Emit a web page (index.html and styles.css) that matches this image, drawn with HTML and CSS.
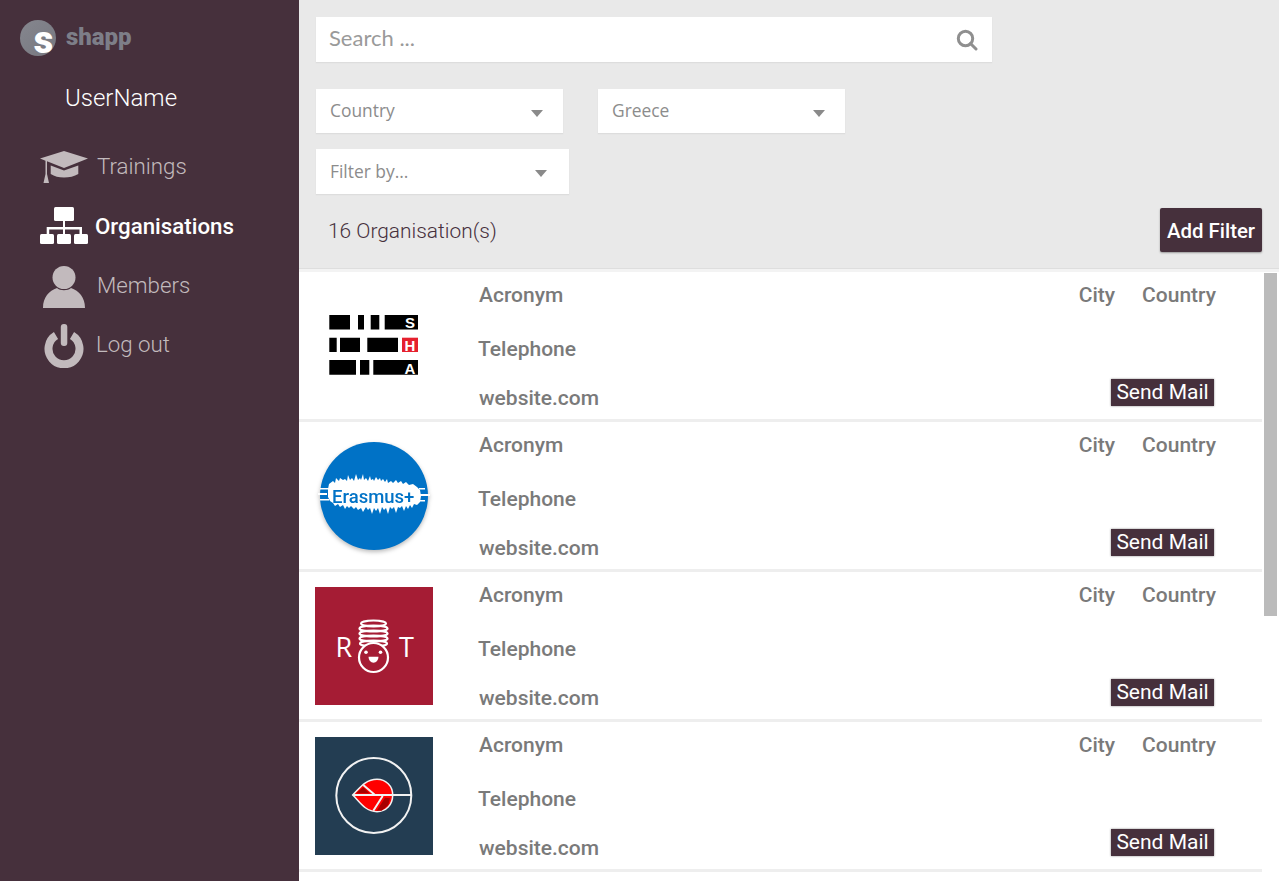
FILE: index.html
```html
<!DOCTYPE html>
<html lang="en">
<head>
    <meta charset="UTF-8">
    <title>shapp</title>
    <link rel="stylesheet" href="styles.css">
</head>
<body>
    <aside class="sidebar">
        <div class="brand">
            <span class="brand-mark">s</span>
            <span class="brand-name">shapp</span>
        </div>
        <div class="user-name">UserName</div>
        <nav class="nav">
            <a class="nav-item nav-trainings">
                <svg class="nav-icon" viewBox="0 0 48 32"><path d="M24 0 48 7.5 24 17 7 10.3V23l2 9H3.500l2-9V9.700L0 7.500z"/><path d="M10.700 14.500 24 19.500l14.300-5V23c-4 2.500-9 3.500-14.300 3.500S14.500 25.500 10.700 23z"/></svg>
                <span>Trainings</span>
            </a>
            <a class="nav-item nav-orgs active">
                <svg class="nav-icon" viewBox="0 0 48 37"><rect x="14" y="0" width="20" height="14" rx="1.5"/><rect x="0" y="27" width="14" height="10" rx="1.5"/><rect x="17" y="27" width="14" height="10" rx="1.5"/><rect x="34" y="27" width="14" height="10" rx="1.5"/><path d="M23 14h2v6h17v7h-2.500v-4.500H25V27h-2v-4.500H9.200V27H6.700v-7H23z"/></svg>
                <span>Organisations</span>
            </a>
            <a class="nav-item nav-members">
                <svg class="nav-icon" viewBox="0 0 42 42"><circle cx="21" cy="11.5" r="11.5"/><path d="M0 42C0 31 6 25 14 22c3 3 11 3 14 0 8 3 14 9 14 20z"/></svg>
                <span>Members</span>
            </a>
            <a class="nav-item nav-logout">
                <svg class="nav-icon" viewBox="0 0 40 44"><path d="M12 11.500a15.500 15.500 0 1 0 16 0" fill="none"/><rect x="16.800" y="0" width="6.500" height="22" rx="3"/></svg>
                <span>Log out</span>
            </a>
        </nav>
    </aside>

    <main class="main">
        <header class="toolbar">
            <div class="search">
                <span class="search-text">Search ...</span>
                <svg class="search-icon" viewBox="0 0 22 22"><circle cx="9.500" cy="9.500" r="7.200"/><path d="M14.500 14.500 20 20"/></svg>
            </div>
            <div class="filters">
                <div class="select select-country"><span>Country</span><i class="caret"></i></div>
                <div class="select select-country"><span>Greece</span><i class="caret"></i></div>
            </div>
            <div class="select select-filter"><span>Filter by...</span><i class="caret"></i></div>
            <div class="count-row">
                <span class="count">16 Organisation(s)</span>
                <button class="add-btn">Add Filter</button>
            </div>
        </header>

        <div class="list-wrap">
            <div class="list">
                <article class="org">
                    <svg class="org-logo" viewBox="0 0 118 118">
                        <rect width="118" height="118" fill="#fff"/>
                        <path d="M14.300 28H35v14.500H14.300zM43 28h6v14.500h-6zM55.700 28h8.600v14.500h-8.600zM69.700 28H103v14.500H69.700zM14.300 50.700h7.400V65h-7.400zM25 50.700h20V65H25zM52.300 50.700H83V65H52.300zM14.300 73H41v14.700H14.300zM45 73h9.300v14.700H45zM58.300 73H103v14.700H58.300z"/>
                        <rect x="87" y="50.700" width="16" height="14.300" fill="#e5202e"/>
                        <text class="sha-letter" x="95" y="40.700">S</text>
                        <text class="sha-letter" x="95" y="63.500">H</text>
                        <text class="sha-letter" x="95" y="86.500">A</text>
                    </svg>
                    <div class="org-info">
                        <div class="org-line line-top"><span class="acronym">Acronym</span><span class="place"><span class="city">City</span><span>Country</span></span></div>
                        <div class="org-line line-mid"><span class="phone">Telephone</span></div>
                        <div class="org-line line-end"><span class="site">website.com</span><button class="mail-btn">Send Mail</button></div>
                    </div>
                </article>

                <article class="org">
                    <svg class="org-logo logo-erasmus" viewBox="0 0 118 118">
                        <circle cx="59" cy="59" r="54" fill="#0072c6"/>
                        <polygon fill="#fff" points="14,47 18,44 20,46 21,41 24,44 25,41 28,43 30,42 32,44 33,38 35,43 37,41 39,44 41,37 43,43 45,41 46,43 48,37 49,43 51,41 53,44 55,39 56,43 58,42 59,44 61,40 63,43 65,41 66,44 68,42 70,45 72,42 73,46 76,44 78,46 81,43 83,46 86,44 88,47 91,45 94,48 98,47 102,50 105,53 106,59 105,65 102,68 99,67 97,71 95,68 93,72 91,69 89,74 87,69 85,71 83,70 81,76 79,70 77,72 75,70 73,77 71,71 69,73 67,70 65,77 63,71 61,74 59,71 57,77 55,71 53,73 51,70 48,75 46,71 43,73 41,70 39,72 36,69 34,71 32,69 30,72 28,68 25,70 23,67 20,69 18,66 15,64 13,60 13,52"/>
                        <path fill="#fff" d="M5 51h9v1.500H5zM3 56h9v2H3zM5 62h9v1.500H5zM104 57h11v2h-11zM102 63h8v1.500h-8zM104 51h6v1.500h-6z"/>
                        <text class="erasmus-text" x="17" y="66">Erasmus+</text>
                    </svg>
                    <div class="org-info">
                        <div class="org-line line-top"><span class="acronym">Acronym</span><span class="place"><span class="city">City</span><span>Country</span></span></div>
                        <div class="org-line line-mid"><span class="phone">Telephone</span></div>
                        <div class="org-line line-end"><span class="site">website.com</span><button class="mail-btn">Send Mail</button></div>
                    </div>
                </article>

                <article class="org">
                    <svg class="org-logo" viewBox="0 0 118 118">
                        <rect width="118" height="118" fill="#a51c34"/>
                        <text class="rt-letter" x="20.500" y="70">R</text>
                        <text class="rt-letter" x="84" y="70">T</text>
                        <g fill="none" stroke="#fff" stroke-width="2.200">
                            <ellipse cx="58.500" cy="36.500" rx="12.500" ry="3"/>
                            <ellipse cx="58.500" cy="41.500" rx="14" ry="3"/>
                            <ellipse cx="58.500" cy="46.500" rx="14" ry="3"/>
                            <ellipse cx="58.500" cy="51.500" rx="14" ry="3"/>
                            <ellipse cx="58.500" cy="56.500" rx="13.500" ry="3"/>
                            <circle cx="58.500" cy="70.500" r="14.500" fill="#a51c34"/>
                        </g>
                        <circle cx="51" cy="65.300" r="1.800" fill="#fff"/>
                        <circle cx="65.500" cy="65.300" r="1.800" fill="#fff"/>
                        <path d="M53.500 69.700h10a5 6 0 0 1-10 0z" fill="#fff"/>
                    </svg>
                    <div class="org-info">
                        <div class="org-line line-top"><span class="acronym">Acronym</span><span class="place"><span class="city">City</span><span>Country</span></span></div>
                        <div class="org-line line-mid"><span class="phone">Telephone</span></div>
                        <div class="org-line line-end"><span class="site">website.com</span><button class="mail-btn">Send Mail</button></div>
                    </div>
                </article>

                <article class="org">
                    <svg class="org-logo" viewBox="0 0 118 118">
                        <rect width="118" height="118" fill="#233d52"/>
                        <circle cx="58.800" cy="58.500" r="37.500" fill="none" stroke="#f2f2f2" stroke-width="2"/>
                        <path d="M37.700 58C44 52 50 42.300 62 42.300c9 0 15.700 6.700 15.700 15.700 0 10-6.700 16.700-15.700 16.700C50 74.700 44 64 37.700 58z" fill="#f00" stroke="#f2f2f2" stroke-width="1.500"/>
                        <path d="M41 56.300l7.300-6 6 6zM61.700 73.700 70 60.700l5 .6-1.700 6.700-6.600 5.700z" fill="#a80000"/>
                        <path d="M37.700 58h58.800M48.300 48 60 58M58.300 73.700 67.700 59" fill="none" stroke="#f2f2f2" stroke-width="2"/>
                    </svg>
                    <div class="org-info">
                        <div class="org-line line-top"><span class="acronym">Acronym</span><span class="place"><span class="city">City</span><span>Country</span></span></div>
                        <div class="org-line line-mid"><span class="phone">Telephone</span></div>
                        <div class="org-line line-end"><span class="site">website.com</span><button class="mail-btn">Send Mail</button></div>
                    </div>
                </article>
            </div>
            <div class="scrollbar"><div class="scroll-thumb"></div></div>
        </div>
    </main>
</body>
</html>
```

FILE: styles.css
```css
* {
    box-sizing: border-box;
}
html, body {
    height: 100%;
}
body {
    margin: 0;
    display: flex;
    overflow: hidden;
    font-family: Roboto, "Liberation Sans", sans-serif;
    background-color: #fff;
}

/* sidebar */
.sidebar {
    width: 299px;
    flex: none;
    padding: 20px 0 0 20px;
    background-color: #46303c;
    color: #fff;
}
.brand {
    display: flex;
    align-items: center;
    height: 36px;
}
.brand-mark {
    width: 36px;
    height: 36px;
    flex: none;
    padding: 3px 0 0 11px;
    border-radius: 50%;
    background: linear-gradient(135deg, #85868e, #777880);
    color: #fff;
    font-size: 38px;
    font-weight: 900;
    line-height: 34px;
    text-align: center;
}
.brand-name {
    margin: -2px 0 0 10px;
    color: #7d7e88;
    font-size: 24px;
    font-weight: 900;
}
.user-name {
    margin: 27px 0 0 45px;
    font-size: 24px;
    font-weight: 300;
    line-height: 30px;
}
.nav {
    margin-top: 24px;
}
.nav-item {
    display: flex;
    align-items: center;
    height: 59px;
    color: #c2babd;
    font-size: 22.3px;
    font-weight: 300;
}
.nav-trainings span {
    margin-top: -1px;
}
.nav-icon {
    flex: none;
    fill: #c2babd;
    stroke: #c2babd;
    stroke-width: 0;
}
.nav-item.active {
    color: #fff;
    font-weight: 500;
}
.nav-item.active .nav-icon {
    fill: #fff;
}
.nav-trainings .nav-icon {
    width: 48px;
    height: 32px;
    margin: 0 9px 0 20px;
}
.nav-orgs .nav-icon {
    width: 48px;
    height: 37px;
    margin: 0 7px 0 20px;
}
.nav-members .nav-icon {
    width: 42px;
    height: 42px;
    margin: 5px 12px 0 23px;
}
.nav-logout .nav-icon {
    width: 40px;
    height: 44px;
    margin: 4px 12px 0 24px;
}
.nav-logout .nav-icon path {
    stroke-width: 8;
}

/* main column */
.main {
    flex: 1;
    min-width: 0;
    display: flex;
    flex-direction: column;
}
.toolbar {
    height: 272px;
    flex: none;
    padding: 17px 17px 0 17px;
    background-color: #e9e9e9;
    border-bottom: 3px solid #f3f3f3;
    box-shadow: inset 0 -1px #dedede;
}
.search {
    display: flex;
    align-items: center;
    justify-content: space-between;
    width: 676px;
    height: 45px;
    padding: 0 14px 0 13px;
    background-color: #fff;
    box-shadow: 0 1px 1px #ddd;
}
.search-text {
    margin-top: -5px;
    color: #9a9a9a;
    font-family: Lato, sans-serif;
    font-size: 22px;
}
.search-icon {
    width: 22px;
    height: 22px;
    fill: none;
    stroke: #8f8f8f;
    stroke-width: 3;
    stroke-linecap: round;
}
.filters {
    display: flex;
    gap: 35px;
    margin-top: 27px;
}
.select {
    display: flex;
    align-items: center;
    justify-content: space-between;
    padding: 0 20px 0 14px;
    background-color: #fff;
    box-shadow: 0 1px 1px #ddd;
    color: #8c8c8c;
    font-family: "Open Sans", sans-serif;
    font-size: 17.4px;
}
.select span {
    margin-top: -2px;
}
.select-country {
    width: 247px;
    height: 44px;
}
.select-filter {
    width: 253px;
    height: 45px;
    margin-top: 16px;
    padding-right: 22px;
}
.caret {
    width: 0;
    height: 0;
    margin-top: 4px;
    border-left: 6.5px solid transparent;
    border-right: 6.5px solid transparent;
    border-top: 7px solid #8a8a8a;
}
.count-row {
    display: flex;
    align-items: center;
    justify-content: space-between;
    margin-top: 14px;
    padding-left: 12px;
}
.count {
    margin-top: 2px;
    color: #46303c;
    font-size: 20.9px;
    font-weight: 300;
}
.add-btn {
    width: 102px;
    height: 44px;
    padding: 2px 0 0;
    border: none;
    border-radius: 2px;
    background-color: #46303c;
    box-shadow: 0 1px 2px #999;
    color: #fff;
    font-family: Roboto, sans-serif;
    font-size: 20.4px;
    font-weight: 500;
}

/* organisation list */
.list-wrap {
    flex: 1;
    min-height: 0;
    display: flex;
}
.list {
    flex: 1;
    min-width: 0;
}
.org {
    display: flex;
    height: 150px;
    padding: 15px 0 0 16px;
    background-color: #fff;
    border-bottom: 3px solid #eee;
}
.org-logo {
    width: 118px;
    height: 118px;
    flex: none;
}
.logo-erasmus {
    overflow: visible;
    filter: drop-shadow(0 2px 2px #bbb);
}
.sha-letter {
    fill: #fff;
    font-family: "Liberation Sans", sans-serif;
    font-size: 15px;
    font-weight: 700;
    text-anchor: middle;
}
.erasmus-text {
    fill: #0072c6;
    font-family: Roboto, sans-serif;
    font-size: 18.5px;
    font-weight: 500;
}
.rt-letter {
    fill: #fff;
    font-family: "Open Sans", sans-serif;
    font-size: 27px;
}
.org-info {
    flex: 1;
    min-width: 0;
    margin: -15px 46px 0 46px;
    color: #7a7a7a;
    font-size: 21px;
    font-weight: 500;
}
.org-line {
    display: flex;
    justify-content: space-between;
    align-items: center;
}
.line-top {
    height: 46px;
}
.line-mid {
    height: 62px;
}
.line-end {
    height: 36px;
}
.phone {
    margin-left: -1px;
}
.place {
    display: flex;
    gap: 27px;
}
.mail-btn {
    width: 103px;
    height: 27px;
    margin: -12px 2px 0 0;
    padding: 0;
    border: none;
    background-color: #46303c;
    box-shadow: 0 0 2px #888;
    color: #fff;
    font-family: Roboto, sans-serif;
    font-size: 21px;
}

/* scrollbar column */
.scrollbar {
    width: 17px;
    flex: none;
    padding: 1px 2px 0 2px;
    background-color: #fff;
}
.scroll-thumb {
    height: 343px;
    background-color: #bbb;
}
```
